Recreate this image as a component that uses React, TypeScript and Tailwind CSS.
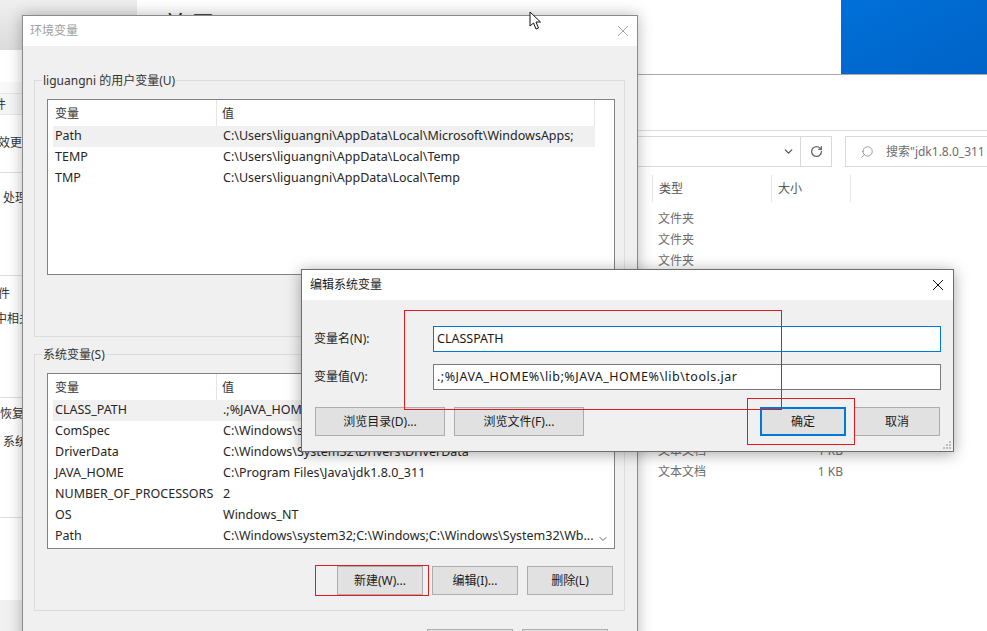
import { ChevronDown, RotateCw, Search } from 'lucide-react';

const userVars = [
  ['Path', 'C:\\Users\\liguangni\\AppData\\Local\\Microsoft\\WindowsApps;'],
  ['TEMP', 'C:\\Users\\liguangni\\AppData\\Local\\Temp'],
  ['TMP', 'C:\\Users\\liguangni\\AppData\\Local\\Temp'],
];

const systemVars = [
  ['CLASS_PATH', '.;%JAVA_HOME%\\lib;%JAVA_HOME%\\lib\\tools.jar'],
  ['ComSpec', 'C:\\Windows\\system32\\cmd.exe'],
  ['DriverData', 'C:\\Windows\\System32\\Drivers\\DriverData'],
  ['JAVA_HOME', 'C:\\Program Files\\Java\\jdk1.8.0_311'],
  ['NUMBER_OF_PROCESSORS', '2'],
  ['OS', 'Windows_NT'],
  ['Path', 'C:\\Windows\\system32;C:\\Windows;C:\\Windows\\System32\\Wb...'],
];

function CloseIcon({ color }: { color: string }) {
  return (
    <svg width="12" height="12" viewBox="0 0 12 12" fill="none" stroke={color} strokeWidth="1">
      <path d="M1 1 L11 11 M11 1 L1 11" />
    </svg>
  );
}

function Btn({ label, width = 'w-[86px]' }: { label: string; width?: string }) {
  return (
    <div className={`${width} h-[29px] flex items-center justify-center bg-[#e1e1e1] border border-[#adadad] text-[12px] text-[#1a1a1a]`}>
      {label}
    </div>
  );
}

function VarList({ rows, scroll }: { rows: string[][]; scroll?: boolean }) {
  return (
    <div className="relative ml-[11px] mt-[9px] w-[568px] h-[176px] bg-white border border-[#828282] overflow-hidden">
      {/* header */}
      <div className="flex h-[26px] ml-[5px] w-[542px] text-[12px] text-[#333]">
        <div className="w-[164px] pl-[2px] pt-[5px] border-r border-[#e5e5e5]">变量</div>
        <div className="flex-1 pl-[5px] pt-[5px] border-r border-[#e5e5e5]">值</div>
      </div>
      {rows.map((r, i) => (
        <div key={r[0]} className={`flex h-[21px] items-center ml-[5px] w-[542px] text-[12.5px] text-[#262626] ${i === 0 ? 'bg-[#f0f0f0]' : ''}`}>
          <div className="w-[170px] pl-[2px] whitespace-nowrap">{r[0]}</div>
          <div className="whitespace-nowrap">{r[1]}</div>
        </div>
      ))}
      {scroll && <ChevronDown className="absolute right-[5px] bottom-[3px] text-[#666]" size={12} strokeWidth={2} />}
    </div>
  );
}

function Group({ title, children }: { title: string; children: React.ReactNode }) {
  return (
    <div className="w-[591px] h-[257px] border border-[#dcdcdc] -ml-px">
      <div className="w-fit h-[18px] -mt-[9px] ml-[7px] px-px bg-[#f0f0f0] text-[12px] leading-[18px] text-[#333]">{title}</div>
      <div className="ml-px">{children}</div>
    </div>
  );
}

function EnvDialog() {
  return (
    <div className="absolute left-[22px] top-[15px] w-[616px] h-[640px] bg-[#f0f0f0] border border-[#8a8a8a] shadow-[0_0_14px_rgba(0,0,0,0.28)]">
      <div className="h-[30px] bg-white flex items-center justify-between pl-[7px] pr-[8px] text-[12px] text-[#a0a0a0]">
        <span>环境变量</span>
        <CloseIcon color="#a6a6a6" />
      </div>
      <div className="pt-[34px] pl-[12px]">
        <Group title="liguangni 的用户变量(U)">
          <VarList rows={userVars} />
        </Group>
        <div className="mt-[17px]">
          <Group title="系统变量(S)">
            <VarList rows={systemVars} scroll />
            <div className="flex justify-end gap-[9px] mt-[17px] pr-[11px]">
              <Btn label="新建(W)..." />
              <Btn label="编辑(I)..." />
              <Btn label="删除(L)" />
            </div>
          </Group>
        </div>
        <div className="flex justify-end gap-[9px] mt-[18px] pr-[29px]">
          <Btn label="确定" />
          <Btn label="取消" />
        </div>
      </div>
    </div>
  );
}

function EditDialog() {
  return (
    <div className="absolute left-[301px] top-[269px] w-[653px] h-[183px] bg-[#f0f0f0] border border-[#6e6e6e] shadow-[0_2px_14px_rgba(0,0,0,0.35)]">
      <div className="h-[30px] bg-white flex items-center justify-between pl-[8px] pr-[9px] text-[12px] text-[#1a1a1a]">
        <span>编辑系统变量</span>
        <CloseIcon color="#111" />
      </div>
      <div className="pt-[26px] pl-[12px] pr-[13px] text-[12px] text-[#1a1a1a]">
        <div className="flex items-center">
          <div className="w-[119px] shrink-0">变量名(N):</div>
          <div className="w-[508px] shrink-0 h-[26px] bg-white border border-[#0078d7] flex items-center pl-[3px] text-[12.5px]">CLASSPATH</div>
        </div>
        <div className="flex items-center mt-[12px]">
          <div className="w-[119px] shrink-0">变量值(V):</div>
          <div className="w-[508px] shrink-0 h-[26px] bg-white border border-[#7a7a7a] flex items-center pl-[3px] whitespace-nowrap text-[12.5px] tracking-[0.5px]">
            .;%JAVA_HOME%\lib;%JAVA_HOME%\lib\tools.jar
          </div>
        </div>
        <div className="flex items-center mt-[17px] pl-px">
          <Btn label="浏览目录(D)..." width="w-[130px]" />
          <div className="ml-[9px]">
            <Btn label="浏览文件(F)..." width="w-[130px]" />
          </div>
          <div className="ml-auto flex gap-[8px]">
            <div className="w-[86px] h-[29px] flex items-center justify-center bg-[#e1e1e1] border-2 border-[#0078d7]">确定</div>
            <Btn label="取消" />
          </div>
        </div>
      </div>
      {/* resize grip */}
      <svg className="absolute right-px bottom-px" width="10" height="10" viewBox="0 0 10 10" fill="#bdbdbd">
        <rect x="7" y="1" width="2" height="2" />
        <rect x="4" y="4" width="2" height="2" />
        <rect x="7" y="4" width="2" height="2" />
        <rect x="1" y="7" width="2" height="2" />
        <rect x="4" y="7" width="2" height="2" />
        <rect x="7" y="7" width="2" height="2" />
      </svg>
    </div>
  );
}

function BackWindow() {
  const rowClass = 'whitespace-nowrap text-[12px] leading-[18px] text-[#333] shrink-0';
  return (
    <div className="absolute left-0 top-0 w-[137px] h-[631px] overflow-hidden">
      <div className="h-[50px] bg-gradient-to-b from-[#efefef] to-[#dcdcdc]" />
      <div className="w-[22px] h-[581px] bg-white flex flex-col overflow-hidden">
        <div className="h-[32px] shrink-0" />
        <div className="h-[11px] shrink-0 bg-[#f8f8f8]" />
        <div className="h-[22px] shrink-0 bg-[#f6f6f6] border-y border-[#e6e6e6] flex items-center pt-[2px]">
          <div className={`${rowClass} -ml-[6px]`}>件</div>
        </div>
        <div className={`${rowClass} mt-[19px] -ml-[2px]`}>效更新</div>
        <div className="mt-[20px] border-t border-[#dddddd]" />
        <div className={`${rowClass} mt-[16px] ml-[3px]`}>处理</div>
        <div className="mt-[68px] border-t border-[#dddddd]" />
        <div className={`${rowClass} mt-[9px] -ml-[2px]`}>件</div>
        <div className={`${rowClass} mt-[7px] -ml-[5px]`}>中相关</div>
        <div className="mt-[69px] border-t border-[#dddddd]" />
        <div className={`${rowClass} mt-[7px]`}>恢复</div>
        <div className={`${rowClass} mt-[10px] ml-[3px]`}>系统</div>
        <div className="mt-[66px] border-t border-[#dddddd]" />
        <div className="mt-[82px] flex-1 bg-[#f0f0f0]" />
      </div>
    </div>
  );
}

function Explorer() {
  const cell = 'h-[21px] flex items-center text-[12px] text-[#6d6d6d]';
  return (
    <div className="absolute left-[637px] top-[74px] w-[350px] h-[557px] bg-white border-t border-[#a8a8a8] overflow-hidden">
      <div className="h-[56px] border-b border-[#dcdcdc]" />
      <div className="flex mt-[5px] h-[31px]">
        <div className="flex w-[195px] border border-l-0 border-[#d9d9d9]">
          <div className="w-[164px] flex items-center justify-end pr-[5px] border-r border-[#d9d9d9]">
            <ChevronDown size={13} strokeWidth={2.4} className="text-[#555]" />
          </div>
          <div className="flex-1 flex items-center justify-center">
            <RotateCw size={13} strokeWidth={2.4} className="text-[#666]" />
          </div>
        </div>
        <div className="ml-[13px] flex-1 flex items-center border border-r-0 border-[#d9d9d9] whitespace-nowrap text-[12px] text-[#6d6d6d]">
          <Search size={14} strokeWidth={1.2} className="ml-[14px] -scale-x-100 text-[#777]" />
          <span className="ml-[12px]">搜索"jdk1.8.0_311</span>
        </div>
      </div>
      <div className="flex mt-[8px] h-[27px] ml-[15px] text-[12px] text-[#555]">
        <div className="w-[120px] pl-[6px] flex items-center border-l border-r border-[#e5e5e5]">类型</div>
        <div className="w-[79px] pl-[6px] flex items-center border-r border-[#e5e5e5]">大小</div>
      </div>
      <div className="ml-[21px] mt-[6px]">
        <div className={cell}>文件夹</div>
        <div className={cell}>文件夹</div>
        <div className={cell}>文件夹</div>
        {[0, 1].map((i) => (
          <div key={i} className={`${cell} w-[185px] justify-between ${i === 0 ? 'mt-[169px]' : ''}`}>
            <span>文本文档</span>
            <span>1 KB</span>
          </div>
        ))}
      </div>
    </div>
  );
}

export default function App() {
  return (
    <div className="relative w-[987px] h-[631px] overflow-hidden bg-white font-['Noto_Sans','Noto_Sans_CJK_SC',sans-serif]">
      <BackWindow />
      {/* heading peeking out above the dialog */}
      <div className="absolute left-[163px] top-[8px] text-[24px] leading-[32px] tracking-[4px] text-[#222]">关于</div>
      <div className="absolute left-[841px] top-0 w-[146px] h-[74px] bg-gradient-to-br from-[#0070d8] to-[#0063c8]" />
      <Explorer />
      <EnvDialog />
      <EditDialog />

      {/* red annotation boxes */}
      <div className="absolute left-[315px] top-[565px] w-[114px] h-[31px] border border-[#e01b20]" />
      <div className="absolute left-[404px] top-[310px] w-[378px] h-[100px] border border-[#e01b20]" />
      <div className="absolute left-[747px] top-[398px] w-[108px] h-[47px] border border-[#e01b20]" />

      {/* mouse cursor */}
      <svg className="absolute left-[529px] top-[11px]" width="13" height="20" viewBox="0 0 13 20" fill="white" stroke="#111" strokeWidth="1">
        <path d="M1 1 L1 15 L4.5 12 L7 18 L9.5 17 L7 11 L11.5 11 Z" />
      </svg>
    </div>
  );
}
